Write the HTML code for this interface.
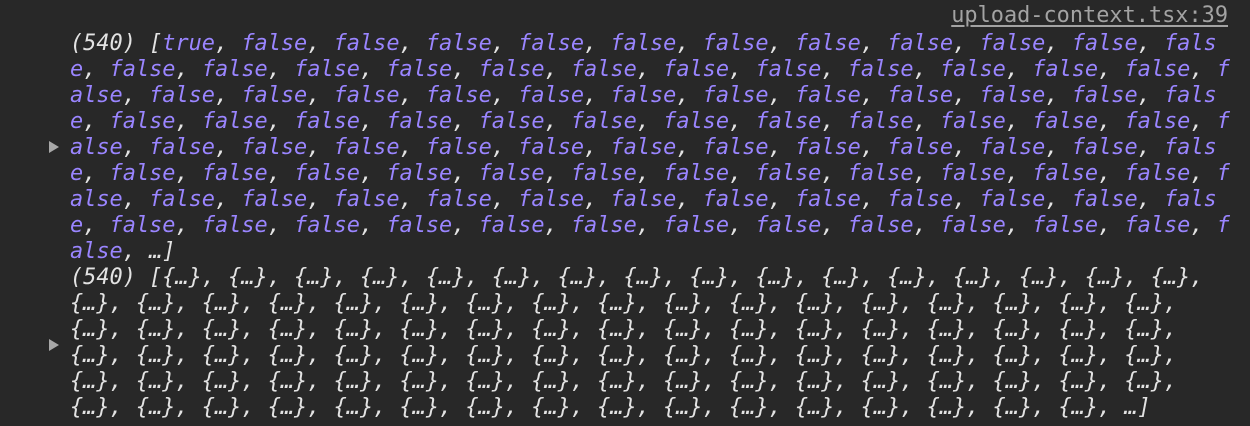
<!DOCTYPE html>
<html><head><meta charset="utf-8"><style>
html,body{margin:0;padding:0;background:#282828;width:1250px;height:426px;overflow:hidden}
body{position:relative;font-family:"DejaVu Sans Mono","Liberation Mono",monospace;font-size:21.9px}
.link{position:absolute;right:22px;top:3px;line-height:26px;color:#a3a3a3;text-decoration:underline;text-underline-offset:3px;font-style:normal}
.blk{position:absolute;left:70px;line-height:26px;font-style:italic;white-space:pre}
.p{color:#9a85ff}.w{color:#e3e3e3}
.tri{position:absolute;left:49px;width:0;height:0;border-left:10px solid #a8a8a8;border-top:6px solid transparent;border-bottom:6px solid transparent}
</style></head><body>
<div class="link">upload-context.tsx:39</div>
<div class="tri" style="top:141px"></div>
<div class="tri" style="top:339px"></div>
<div class="blk" style="top:31px"><span class="w">(540) [</span><span class="p">true</span><span class="w">, </span><span class="p">false</span><span class="w">, </span><span class="p">false</span><span class="w">, </span><span class="p">false</span><span class="w">, </span><span class="p">false</span><span class="w">, </span><span class="p">false</span><span class="w">, </span><span class="p">false</span><span class="w">, </span><span class="p">false</span><span class="w">, </span><span class="p">false</span><span class="w">, </span><span class="p">false</span><span class="w">, </span><span class="p">false</span><span class="w">, </span><span class="p">fals</span>
<span class="p">e</span><span class="w">, </span><span class="p">false</span><span class="w">, </span><span class="p">false</span><span class="w">, </span><span class="p">false</span><span class="w">, </span><span class="p">false</span><span class="w">, </span><span class="p">false</span><span class="w">, </span><span class="p">false</span><span class="w">, </span><span class="p">false</span><span class="w">, </span><span class="p">false</span><span class="w">, </span><span class="p">false</span><span class="w">, </span><span class="p">false</span><span class="w">, </span><span class="p">false</span><span class="w">, </span><span class="p">false</span><span class="w">, </span><span class="p">f</span>
<span class="p">alse</span><span class="w">, </span><span class="p">false</span><span class="w">, </span><span class="p">false</span><span class="w">, </span><span class="p">false</span><span class="w">, </span><span class="p">false</span><span class="w">, </span><span class="p">false</span><span class="w">, </span><span class="p">false</span><span class="w">, </span><span class="p">false</span><span class="w">, </span><span class="p">false</span><span class="w">, </span><span class="p">false</span><span class="w">, </span><span class="p">false</span><span class="w">, </span><span class="p">false</span><span class="w">, </span><span class="p">fals</span>
<span class="p">e</span><span class="w">, </span><span class="p">false</span><span class="w">, </span><span class="p">false</span><span class="w">, </span><span class="p">false</span><span class="w">, </span><span class="p">false</span><span class="w">, </span><span class="p">false</span><span class="w">, </span><span class="p">false</span><span class="w">, </span><span class="p">false</span><span class="w">, </span><span class="p">false</span><span class="w">, </span><span class="p">false</span><span class="w">, </span><span class="p">false</span><span class="w">, </span><span class="p">false</span><span class="w">, </span><span class="p">false</span><span class="w">, </span><span class="p">f</span>
<span class="p">alse</span><span class="w">, </span><span class="p">false</span><span class="w">, </span><span class="p">false</span><span class="w">, </span><span class="p">false</span><span class="w">, </span><span class="p">false</span><span class="w">, </span><span class="p">false</span><span class="w">, </span><span class="p">false</span><span class="w">, </span><span class="p">false</span><span class="w">, </span><span class="p">false</span><span class="w">, </span><span class="p">false</span><span class="w">, </span><span class="p">false</span><span class="w">, </span><span class="p">false</span><span class="w">, </span><span class="p">fals</span>
<span class="p">e</span><span class="w">, </span><span class="p">false</span><span class="w">, </span><span class="p">false</span><span class="w">, </span><span class="p">false</span><span class="w">, </span><span class="p">false</span><span class="w">, </span><span class="p">false</span><span class="w">, </span><span class="p">false</span><span class="w">, </span><span class="p">false</span><span class="w">, </span><span class="p">false</span><span class="w">, </span><span class="p">false</span><span class="w">, </span><span class="p">false</span><span class="w">, </span><span class="p">false</span><span class="w">, </span><span class="p">false</span><span class="w">, </span><span class="p">f</span>
<span class="p">alse</span><span class="w">, </span><span class="p">false</span><span class="w">, </span><span class="p">false</span><span class="w">, </span><span class="p">false</span><span class="w">, </span><span class="p">false</span><span class="w">, </span><span class="p">false</span><span class="w">, </span><span class="p">false</span><span class="w">, </span><span class="p">false</span><span class="w">, </span><span class="p">false</span><span class="w">, </span><span class="p">false</span><span class="w">, </span><span class="p">false</span><span class="w">, </span><span class="p">false</span><span class="w">, </span><span class="p">fals</span>
<span class="p">e</span><span class="w">, </span><span class="p">false</span><span class="w">, </span><span class="p">false</span><span class="w">, </span><span class="p">false</span><span class="w">, </span><span class="p">false</span><span class="w">, </span><span class="p">false</span><span class="w">, </span><span class="p">false</span><span class="w">, </span><span class="p">false</span><span class="w">, </span><span class="p">false</span><span class="w">, </span><span class="p">false</span><span class="w">, </span><span class="p">false</span><span class="w">, </span><span class="p">false</span><span class="w">, </span><span class="p">false</span><span class="w">, </span><span class="p">f</span>
<span class="p">alse</span><span class="w">, …]</span></div>
<div class="blk w" style="top:265px">(540) [{…}, {…}, {…}, {…}, {…}, {…}, {…}, {…}, {…}, {…}, {…}, {…}, {…}, {…}, {…}, {…},
{…}, {…}, {…}, {…}, {…}, {…}, {…}, {…}, {…}, {…}, {…}, {…}, {…}, {…}, {…}, {…}, {…},
{…}, {…}, {…}, {…}, {…}, {…}, {…}, {…}, {…}, {…}, {…}, {…}, {…}, {…}, {…}, {…}, {…},
{…}, {…}, {…}, {…}, {…}, {…}, {…}, {…}, {…}, {…}, {…}, {…}, {…}, {…}, {…}, {…}, {…},
{…}, {…}, {…}, {…}, {…}, {…}, {…}, {…}, {…}, {…}, {…}, {…}, {…}, {…}, {…}, {…}, {…},
{…}, {…}, {…}, {…}, {…}, {…}, {…}, {…}, {…}, {…}, {…}, {…}, {…}, {…}, {…}, {…}, …]</div>
</body></html>
